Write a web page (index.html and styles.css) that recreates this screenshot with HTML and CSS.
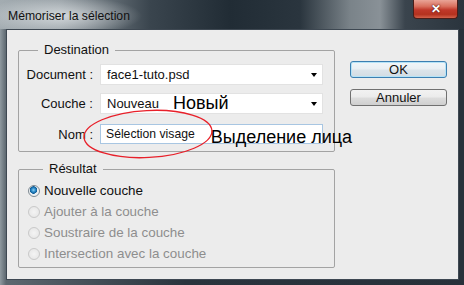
FILE: index.html
```html
<!DOCTYPE html>
<html lang="fr">
<head>
    <meta charset="UTF-8">
    <title>Mémoriser la sélection</title>
    <link rel="stylesheet" href="styles.css">
</head>
<body>
    <div class="window">
        <div class="titlebar">
            <span class="title">Mémoriser la sélection</span>
            <div class="close-btn">&#x2715;</div>
        </div>

        <div class="client">
            <div class="groups">
                <fieldset class="group dest">
                    <legend>Destination</legend>
                    <div class="row row1">
                        <label>Document :</label>
                        <div class="dropdown">face1-tuto.psd</div>
                    </div>
                    <div class="row row2">
                        <label>Couche :</label>
                        <div class="dropdown">Nouveau<span class="note note-small">Новый</span></div>
                    </div>
                    <div class="row row3">
                        <label>Nom :</label>
                        <div class="textbox">Sélection visage<span class="note">Выделение лица</span></div>
                    </div>
                </fieldset>

                <fieldset class="group result">
                    <legend>Résultat</legend>
                    <div class="radio checked"><span class="dot"></span>Nouvelle couche</div>
                    <div class="radio disabled"><span class="dot"></span>Ajouter à la couche</div>
                    <div class="radio disabled"><span class="dot"></span>Soustraire de la couche</div>
                    <div class="radio disabled"><span class="dot"></span>Intersection avec la couche</div>
                </fieldset>
            </div>

            <div class="buttons">
                <div class="btn default">OK</div>
                <div class="btn">Annuler</div>
            </div>
        </div>

        <!-- red circle drawn over the Nom field -->
        <svg class="circle-mark" width="140" height="60" viewBox="0 0 140 60">
            <ellipse cx="70" cy="30" rx="64" ry="23.5" fill="none" stroke="#e8202a" stroke-width="1.3" transform="rotate(-3 70 30)"/>
        </svg>
    </div>
</body>
</html>
```

FILE: styles.css
```css
/* page */
body {
    margin: 0;
    background: #1c252d;
    font-family: "Liberation Sans", Arial, sans-serif;
}

.window {
    position: relative;
    width: 464px;
    height: 285px;
    background: linear-gradient(90deg, #8f999f 0px, #5d6870 6px, #2a343d 40%, #27313a 100%);
    overflow: hidden;
}

/* title bar */
.titlebar {
    height: 29px;
    display: flex;
    align-items: flex-start;
    background:
        radial-gradient(ellipse 80px 20px at 62px 16px, rgba(226, 230, 232, 0.8), rgba(226, 230, 232, 0) 100%),
        linear-gradient(90deg, #a3acb1 0px, #939ca2 60px, #3a454e 150px, #212c35 230px, #2a353e 300px, #7a8389 350px, #899197 380px, #3a444d 405px, #2a343d 464px);
}

.title {
    font-size: 12.2px;
    color: #111;
    margin: 9px 0 0 8px;
}

.close-btn {
    margin-left: auto;
    margin-right: 6px;
    width: 45px;
    height: 19px;
    box-sizing: border-box;
    border: 1px solid #4a1d18;
    border-top: none;
    border-radius: 0 0 4px 4px;
    background: linear-gradient(#e9a497 0%, #d9705e 35%, #c0382a 55%, #b5321f 80%, #d2614a 100%);
    color: #fff;
    font-size: 12px;
    font-weight: bold;
    text-align: center;
    line-height: 18px;
    text-shadow: 0 0 2px #5a1a12, 0 0 1px #5a1a12;
}

/* client area */
.client {
    margin: 0 5px 0 6px;
    height: 251px;
    box-sizing: border-box;
    border: 1px solid #3e4852;
    background: #ececec;
    display: flex;
    padding: 12px 11px 0 11px;
    font-size: 13px;
    color: #111;
}

.groups {
    display: flex;
    flex-direction: column;
}

.group {
    margin: 0;
    width: 317px;
    box-sizing: border-box;
    border: 1px solid #a3a3a3;
    border-radius: 2px;
    padding: 6px 10px 7px 0;
}

.group legend {
    padding: 0 6px;
    line-height: 16px;
    margin-left: 19px;
}

.result legend {
    margin-left: 15px;
}

/* destination rows */
.row {
    display: flex;
    align-items: center;
}

.row label {
    width: 74px;
    text-align: right;
    margin-right: 7px;
}

.row1 { height: 21px; }
.row2 { height: 21px; margin-top: 8px; }
.row3 { height: 20px; margin-top: 10px; }

.dropdown, .textbox {
    width: 223px;
    height: 100%;
    box-sizing: border-box;
    background: #fff;
    border: 1px solid #e2e2e2;
    display: flex;
    align-items: center;
    padding-left: 6px;
    white-space: nowrap;
}

.dropdown::after {
    content: "";
    margin-left: auto;
    margin-right: 5px;
    border-left: 3px solid transparent;
    border-right: 3px solid transparent;
    border-top: 4px solid #000;
}

.textbox {
    border-color: #a8c6e2;
    padding-left: 5px;
    font-size: 12.2px;
}

/* annotations over the dialog */
.note {
    font-family: Arial, "Liberation Sans", sans-serif;
    font-size: 18px;
    color: #000;
    margin-left: 16px;
    position: relative;
    top: 3px;
}

.note-small {
    top: 0;
    margin-left: 14px;
}

/* result radios */
.result {
    margin-top: 9px;
    padding: 3px 10px 3px 9px;
}

.radio {
    height: 21px;
    display: flex;
    align-items: center;
    font-size: 13.4px;
}

.radio .dot {
    width: 12px;
    height: 12px;
    box-sizing: border-box;
    border-radius: 50%;
    margin-right: 4px;
    border: 1px solid #c9c9c9;
    background: radial-gradient(circle at 50% 50%, #f4f4f4, #e3e3e3);
}

.radio.checked .dot {
    border-color: #7f8a92;
    background: radial-gradient(circle at 45% 40%, #8fd0f2 0, #2a8ac8 2px, #0e5a94 3.5px, #e9eef1 4px, #f7f7f7 100%);
}

.radio.disabled {
    color: #8e8e8e;
}

/* buttons */
.buttons {
    margin-left: auto;
    padding-top: 19px;
    display: flex;
    flex-direction: column;
    gap: 11px;
}

.btn {
    width: 97px;
    height: 17px;
    box-sizing: border-box;
    border: 1px solid #707070;
    border-radius: 3px;
    background: linear-gradient(#f2f2f2 0%, #ebebeb 48%, #dddddd 52%, #cfcfcf 100%);
    text-align: center;
    line-height: 15px;
    font-size: 13px;
    color: #111;
}

.btn.default {
    border-color: #3c7fb1;
    box-shadow: inset 0 0 0 1px #b5e3f7;
    background: linear-gradient(#f1f6f9 0%, #e9eff3 48%, #dce4ea 52%, #d2dce3 100%);
}

.circle-mark {
    position: absolute;
    left: 78px;
    top: 104px;
}
```
